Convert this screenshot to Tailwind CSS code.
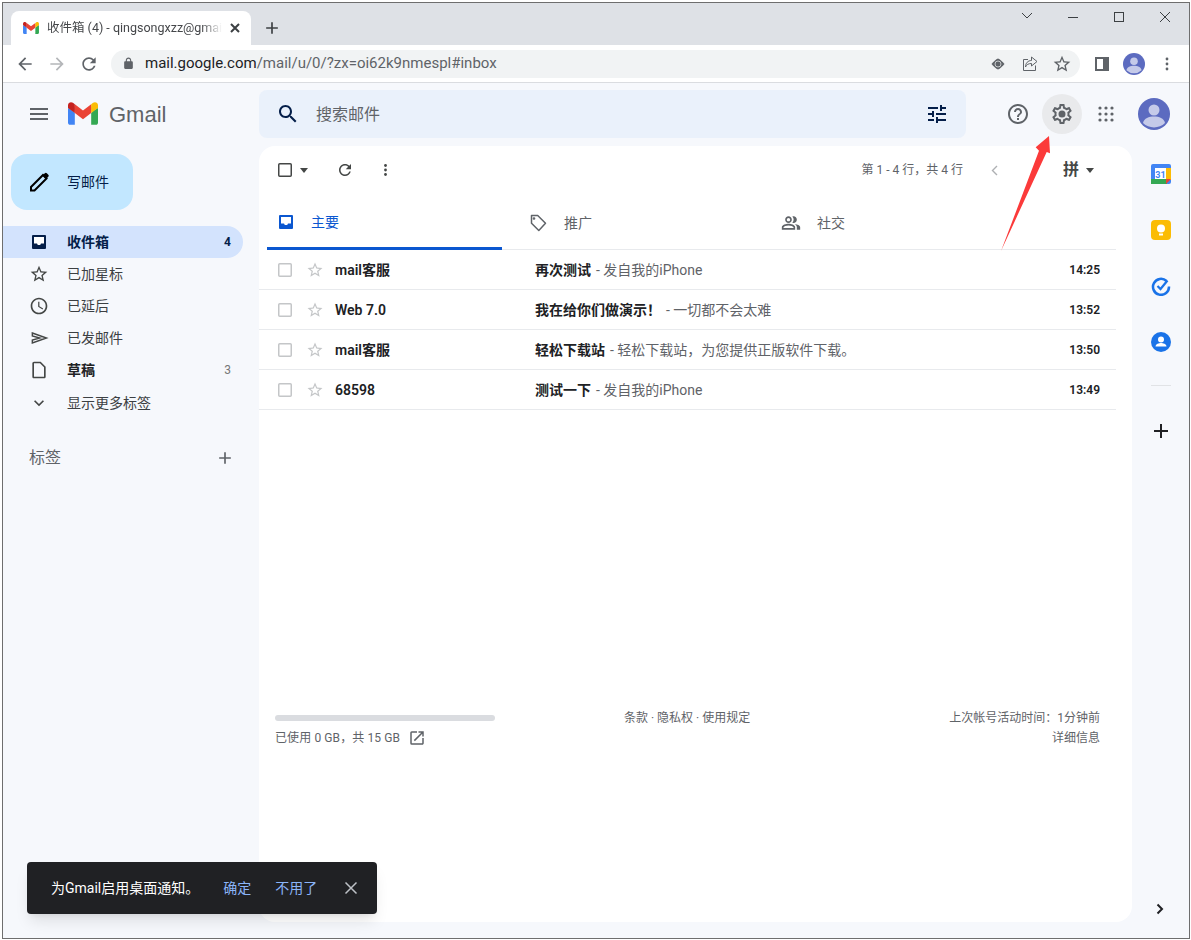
<!DOCTYPE html>
<html lang="zh-CN">
<head>
    <meta charset="UTF-8">
    <title>收件箱 (4) - Gmail</title>
    <script src="https://cdn.jsdelivr.net/npm/@tailwindcss/browser@4"></script>
</head>
<body class="bg-white pl-[2px] pt-[2px] font-['Roboto','Noto_Sans_CJK_SC',sans-serif] text-[#202124]">
    <svg class="hidden">
        <symbol id="i-star" viewBox="0 0 24 24"><path d="M22 9.24l-7.19-.62L12 2 9.19 8.63 2 9.24l5.46 4.73L5.82 21 12 17.27 18.18 21l-1.63-7.03L22 9.24zM12 15.4l-3.76 2.27 1-4.28-3.32-2.88 4.38-.38L12 6.1l1.71 4.04 4.38.38-3.32 2.88 1 4.28L12 15.4z"/></symbol>
        <symbol id="i-plus" viewBox="0 0 24 24"><path d="M19 13h-6v6h-2v-6H5v-2h6V5h2v6h6v2z"/></symbol>
        <symbol id="i-m" viewBox="0 0 256 193">
            <path fill="#4285F4" d="M58.18 192.05V93.14L27.5 65.08 0 49.51v125.09c0 9.66 7.83 17.45 17.45 17.45h40.73Z"/>
            <path fill="#34A853" d="M197.82 192.05h40.73c9.66 0 17.45-7.83 17.45-17.45V49.51l-31.16 17.84-27.02 25.79v98.91Z"/>
            <path fill="#EA4335" d="m58.18 93.14-4.17-38.65 4.17-36.99L128 69.87l69.82-52.37 4.67 35-4.67 40.64L128 145.5z"/>
            <path fill="#FBBC04" d="M197.82 17.5V93.14L256 49.51V26.24c0-21.59-24.64-33.89-41.89-20.95L197.82 17.5Z"/>
            <path fill="#C5221F" d="m0 49.51 26.76 20.07L58.18 93.14V17.5L41.89 5.29C24.61-7.65 0 4.65 0 26.24v23.27Z"/>
        </symbol>
        <symbol id="i-avatar" viewBox="0 0 32 32">
            <circle cx="16" cy="16" r="16" fill="#5c6bc0"/>
            <circle cx="16" cy="12" r="5.5" fill="#c5cae9"/>
            <path fill="#c5cae9" d="M5 25c1-5 6-6.500 11-6.500s10 1.500 11 6.500a16 16 0 0 1-22 0z"/>
        </symbol>
    </svg>

    <div class="relative flex h-[937px] w-[1188px] flex-col overflow-hidden border border-[#6e6e6e] bg-[#f6f8fc]">

        <!-- chrome tabs -->
        <div class="flex h-[42px] shrink-0 items-end bg-[#dee1e6] pl-2">
            <div class="flex h-[34px] w-[240px] items-center rounded-t-lg bg-white pl-3 pr-[9px]">
                <svg class="h-3 w-4 shrink-0"><use href="#i-m"/></svg>
                <span class="ml-2 w-[175px] overflow-hidden whitespace-nowrap text-[12.5px] text-[#45474a] [mask-image:linear-gradient(to_right,#000_88%,transparent)]">收件箱 (4) - qingsongxzz@gmail.com</span>
                <svg class="ml-[6px] h-[14px] w-[14px] shrink-0 fill-none stroke-[#3c4043] stroke-2" viewBox="0 0 14 14"><path d="M3 3l8 8M11 3l-8 8"/></svg>
            </div>
            <svg class="mb-[7px] ml-[11px] h-5 w-5 fill-[#3c4043]" viewBox="0 0 24 24"><use href="#i-plus"/></svg>
            <div class="ml-auto flex self-start pr-px pt-2">
                <svg class="h-3 w-[46px] fill-none stroke-[#3c4043]" viewBox="0 0 46 12"><path d="M18 2l5 5 5-5"/></svg>
                <svg class="h-3 w-[46px] fill-none stroke-[#3c4043]" viewBox="0 0 46 12"><path d="M18 6.500h10"/></svg>
                <svg class="h-3 w-[46px] fill-none stroke-[#3c4043]" viewBox="0 0 46 12"><rect x="18.500" y="1.500" width="9" height="9"/></svg>
                <svg class="h-3 w-[46px] fill-none stroke-[#3c4043]" viewBox="0 0 46 12"><path d="M18 1l10 10M28 1L18 11"/></svg>
            </div>
        </div>

        <!-- chrome toolbar -->
        <div class="flex h-[38px] shrink-0 items-center border-b border-[#dadce0] bg-white pl-[12px]">
            <svg class="h-5 w-5 fill-[#5f6368]" viewBox="0 0 24 24"><path d="M20 11H7.830l5.590-5.590L12 4l-8 8 8 8 1.410-1.410L7.830 13H20v-2z"/></svg>
            <svg class="ml-3 h-5 w-5 fill-[#b4b6b9]" viewBox="0 0 24 24"><path d="M12 4l-1.410 1.410L16.170 11H4v2h12.170l-5.580 5.590L12 20l8-8z"/></svg>
            <svg class="ml-3 h-5 w-5 fill-[#5f6368]" viewBox="0 0 24 24"><path d="M17.650 6.350C16.200 4.900 14.210 4 12 4c-4.420 0-7.990 3.580-7.990 8s3.570 8 7.990 8c3.730 0 6.840-2.550 7.730-6h-2.080c-.82 2.330-3.040 4-5.650 4-3.310 0-6-2.690-6-6s2.690-6 6-6c1.660 0 3.140.69 4.220 1.780L13 11h7V4l-2.350 2.350z"/></svg>
            <div class="ml-3 flex h-7 w-[969px] shrink-0 items-center rounded-full bg-[#f1f3f4] pl-[11px]">
                <svg class="h-[13px] w-[13px] fill-[#5f6368]" viewBox="0 0 24 24"><path d="M18 8h-1V6c0-2.760-2.240-5-5-5S7 3.240 7 6v2H6c-1.100 0-2 .9-2 2v10c0 1.100.9 2 2 2h12c1.100 0 2-.9 2-2V10c0-1.100-.9-2-2-2zM9 6c0-1.660 1.340-3 3-3s3 1.340 3 3v2H9V6z"/></svg>
                <span class="ml-[10px] text-[15px] text-[#202124]">mail.google.com<span class="text-[#5f6368]">/mail/u/0/?zx=oi62k9nmespl#inbox</span></span>
                <div class="ml-auto flex items-center gap-3 pr-2">
                    <svg class="h-5 w-5" viewBox="0 0 20 20"><path fill="#5f6368" d="M10 4.500c1 0 5 3.500 6.500 5.500-1.500 2-5.500 5.500-6.500 5.500S5 12 3.500 10C5 8 9 4.500 10 4.500z"/><circle cx="10" cy="10" r="3" fill="none" stroke="#c9cbcd"/></svg>
                    <svg class="h-5 w-5 fill-none stroke-[#5f6368]" viewBox="0 0 20 20"><path d="M8 5.500H3.500v11h12v-5M11.500 3l5.500 4.500-5.500 4.500V9.500c-3 0-5 1-6 3.500 0-4 2.500-6.500 6-6.500z"/></svg>
                    <svg class="h-5 w-5 fill-[#5f6368]" viewBox="0 0 24 24"><use href="#i-star"/></svg>
                </div>
            </div>
            <svg class="ml-[15px] h-[14px] w-[14px] shrink-0" viewBox="0 0 14 14"><path fill="#5f6368" fill-rule="evenodd" d="M0 0h14v14H0zM2 2v10h6V2z"/></svg>
            <svg class="ml-[14px] h-[22px] w-[22px] shrink-0"><use href="#i-avatar"/></svg>
            <svg class="ml-[20px] h-[14px] w-1 shrink-0 fill-[#5f6368]" viewBox="0 0 4 14"><circle cx="2" cy="2" r="1.400"/><circle cx="2" cy="7" r="1.400"/><circle cx="2" cy="12" r="1.400"/></svg>
        </div>

        <!-- gmail header -->
        <div class="flex h-[63px] shrink-0 items-center pb-[2px]">
            <div class="flex w-[256px] shrink-0 items-center pl-[24px]">
                <svg class="h-6 w-6 fill-[#5f6368]" viewBox="0 0 24 24"><path d="M3 18h18v-2H3v2zm0-5h18v-2H3v2zm0-7v2h18V6H3z"/></svg>
                <svg class="ml-[17px] h-[23px] w-[30px]"><use href="#i-m"/></svg>
                <span class="ml-[11px] pt-[2px] font-['Liberation_Sans','Roboto',sans-serif] text-[22px] text-[#5f6368]">Gmail</span>
            </div>
            <div class="flex h-12 w-[707px] shrink-0 items-center rounded-lg bg-[#eaf1fb] pl-[17px] pr-[17px]">
                <svg class="h-6 w-6 fill-[#041e49]" viewBox="0 0 24 24"><path d="M15.500 14h-.79l-.28-.27C15.410 12.590 16 11.110 16 9.500 16 5.910 13.090 3 9.500 3S3 5.910 3 9.500 5.910 16 9.500 16c1.610 0 3.090-.59 4.230-1.570l.27.28v.79l5 4.990L20.490 19l-4.990-5zm-6 0C7.010 14 5 11.990 5 9.500S7.010 5 9.500 5 14 7.010 14 9.500 11.990 14 9.500 14z"/></svg>
                <span class="ml-4 pt-[2px] text-base text-[#5f6368]">搜索邮件</span>
                <svg class="ml-auto h-6 w-6 fill-[#041e49]" viewBox="0 0 24 24"><path d="M3 17v2h6v-2H3zM3 5v2h10V5H3zm10 16v-2h8v-2h-8v-2h-2v6h2zM7 9v2H3v2h4v2h2V9H7zm14 4v-2H11v2h10zm-6-4h2V7h4V5h-4V3h-2v6z"/></svg>
            </div>
            <div class="flex flex-1 items-center pl-[40px]">
                <svg class="h-6 w-6 shrink-0 fill-[#5f6368]" viewBox="0 0 24 24"><path d="M11 18h2v-2h-2v2zm1-16C6.480 2 2 6.480 2 12s4.480 10 10 10 10-4.480 10-10S17.520 2 12 2zm0 18c-4.410 0-8-3.590-8-8s3.590-8 8-8 8 3.590 8 8-3.590 8-8 8zm0-14c-2.210 0-4 1.790-4 4h2c0-1.100.9-2 2-2s2 .9 2 2c0 2-3 1.750-3 5h2c0-2.250 3-2.500 3-5 0-2.210-1.790-4-4-4z"/></svg>
                <div class="ml-[12px] flex h-10 w-10 shrink-0 items-center justify-center rounded-full bg-[#e9eaec]">
                    <svg class="h-6 w-6 fill-[#5f6368]" viewBox="0 0 24 24"><path d="M19.430 12.980c.04-.32.07-.64.07-.98 0-.34-.03-.66-.07-.98l2.110-1.650c.19-.15.24-.42.12-.64l-2-3.460c-.09-.16-.26-.25-.44-.25-.06 0-.12.01-.17.03l-2.490 1c-.52-.4-1.080-.73-1.690-.98l-.38-2.650C14.460 2.180 14.250 2 14 2h-4c-.25 0-.46.18-.49.42l-.38 2.650c-.61.25-1.170.59-1.690.98l-2.490-1c-.06-.02-.12-.03-.18-.03-.17 0-.34.09-.43.25l-2 3.460c-.13.22-.07.49.12.64l2.110 1.650c-.04.32-.07.65-.07.98 0 .33.03.66.07.98l-2.110 1.650c-.19.15-.24.42-.12.64l2 3.460c.09.16.26.25.44.25.06 0 .12-.01.17-.03l2.490-1c.52.4 1.080.73 1.690.98l.38 2.650c.03.24.24.42.49.42h4c.25 0 .46-.18.49-.42l.38-2.650c.61-.25 1.170-.59 1.690-.98l2.490 1c.06.02.12.03.18.03.17 0 .34-.09.43-.25l2-3.460c.12-.22.07-.49-.12-.64l-2.110-1.650zm-1.980-1.710c.04.31.05.52.05.73 0 .21-.02.43-.05.73l-.14 1.130.89.7 1.080.84-.7 1.210-1.270-.51-1.040-.42-.9.68c-.43.32-.84.56-1.250.73l-1.060.43-.16 1.130-.2 1.350h-1.400l-.19-1.350-.16-1.130-1.060-.43c-.43-.18-.83-.41-1.230-.71l-.91-.7-1.060.43-1.270.51-.7-1.210 1.080-.84.89-.7-.14-1.130c-.03-.31-.05-.54-.05-.74s.02-.43.05-.73l.14-1.130-.89-.7-1.080-.84.7-1.210 1.270.51 1.040.42.9-.68c.43-.32.84-.56 1.250-.73l1.060-.43.16-1.130.2-1.350h1.390l.19 1.350.16 1.130 1.060.43c.43.18.83.41 1.230.71l.91.7 1.060-.43 1.270-.51.7 1.210-1.070.85-.89.7.14 1.130zM12 8.500a3.500 3.500 0 1 0 0 7 3.500 3.500 0 0 0 0-7z"/></svg>
                </div>
                <svg class="ml-[16px] h-4 w-4 shrink-0 fill-[#5f6368]" viewBox="0 0 16 16"><circle cx="2" cy="2" r="1.600"/><circle cx="8" cy="2" r="1.600"/><circle cx="14" cy="2" r="1.600"/><circle cx="2" cy="8" r="1.600"/><circle cx="8" cy="8" r="1.600"/><circle cx="14" cy="8" r="1.600"/><circle cx="2" cy="14" r="1.600"/><circle cx="8" cy="14" r="1.600"/><circle cx="14" cy="14" r="1.600"/></svg>
                <svg class="ml-[24px] h-8 w-8 shrink-0"><use href="#i-avatar"/></svg>
            </div>
        </div>

        <div class="flex min-h-0 flex-1 pb-4">
            <!-- sidebar -->
            <div class="w-[256px] shrink-0 pt-2">
                <div class="ml-2 flex h-14 w-[122px] items-center rounded-2xl bg-[#c2e7ff] pl-[16px]">
                    <svg class="h-6 w-6" viewBox="0 0 24 24"><path fill="none" stroke="#000" stroke-width="2" d="M4 20.500v-3.500L16 5l3.500 3.500L7.500 20.500z"/><path d="M15.500 5.500l2.300-2.300a1.400 1.400 0 0 1 2 0l1.500 1.500a1.400 1.400 0 0 1 0 2L19 9z"/></svg>
                    <span class="ml-[16px] text-sm text-[#041e49]">写邮件</span>
                </div>
                <div class="mt-4 text-sm">
                    <div class="flex h-8 w-[240px] items-center rounded-r-full bg-[#d3e3fd] pl-[26px] pr-3 font-bold text-[#041e49]">
                        <svg class="h-5 w-5 shrink-0" viewBox="0 0 20 20"><rect x="3" y="3" width="14" height="14" rx="1" fill="#041e49"/><path fill="#fff" d="M5 5h10v6.500h-3l-.8 1.500H8.800L8 11.500H5z"/></svg>
                        <span class="ml-[18px]">收件箱</span>
                        <span class="ml-auto text-xs">4</span>
                    </div>
                    <div class="flex h-8 items-center pl-[26px] text-[#3c4043]">
                        <svg class="h-5 w-5 shrink-0 fill-[#444746]" viewBox="0 0 24 24"><use href="#i-star"/></svg>
                        <span class="ml-[18px]">已加星标</span>
                    </div>
                    <div class="flex h-8 items-center pl-[26px] text-[#3c4043]">
                        <svg class="h-5 w-5 shrink-0 fill-[#444746]" viewBox="0 0 24 24"><path d="M11.990 2C6.470 2 2 6.480 2 12s4.470 10 9.990 10C17.520 22 22 17.520 22 12S17.520 2 11.990 2zM12 20c-4.420 0-8-3.580-8-8s3.580-8 8-8 8 3.580 8 8-3.580 8-8 8zm.5-13H11v6l5.250 3.150.75-1.230-4.500-2.670z"/></svg>
                        <span class="ml-[18px]">已延后</span>
                    </div>
                    <div class="flex h-8 items-center pl-[26px] text-[#3c4043]">
                        <svg class="h-5 w-5 shrink-0 fill-none stroke-[#444746] stroke-[1.700]" viewBox="0 0 24 24"><path d="M4 6l17 6-17 6v-3.500l9-2.500-9-2.500z"/></svg>
                        <span class="ml-[18px]">已发邮件</span>
                    </div>
                    <div class="flex h-8 w-[240px] items-center pl-[26px] pr-3 font-semibold text-[#202124]">
                        <svg class="h-5 w-5 shrink-0 fill-[#444746]" viewBox="0 0 24 24"><path d="M14 2H6c-1.100 0-2 .9-2 2v16c0 1.100.9 2 2 2h12c1.100 0 2-.9 2-2V8l-6-6zm4 18H6V4h7.170L18 8.830V20z"/></svg>
                        <span class="ml-[18px]">草稿</span>
                        <span class="ml-auto text-xs font-normal text-[#777]">3</span>
                    </div>
                    <div class="mt-px flex h-8 items-center pl-[26px] text-[#3c4043]">
                        <svg class="h-5 w-5 shrink-0 fill-[#444746]" viewBox="0 0 24 24"><path d="M16.590 8.590L12 13.170 7.410 8.590 6 10l6 6 6-6z"/></svg>
                        <span class="ml-[18px]">显示更多标签</span>
                    </div>
                </div>
                <div class="mt-[23px] flex h-8 w-[232px] items-center justify-between pl-[26px] text-base text-[#5f6368]">
                    <span>标签</span>
                    <svg class="h-5 w-5 fill-[#5f6368]" viewBox="0 0 24 24"><use href="#i-plus"/></svg>
                </div>
            </div>

            <!-- mail card -->
            <div class="w-[873px] shrink-0 rounded-2xl bg-white">
                <div class="flex h-12 items-center pl-[17px] pr-[38px]">
                    <svg class="h-[18px] w-[18px] fill-none stroke-[#444746] stroke-[1.500]" viewBox="0 0 18 18"><rect x="2.750" y="2.750" width="12.500" height="12.500" rx="1"/></svg>
                    <svg class="ml-[6px] h-[5px] w-2 fill-[#444746]" viewBox="0 0 8 5"><path d="M0 0h8L4 5z"/></svg>
                    <svg class="ml-[28px] h-[18px] w-[18px] fill-[#444746]" viewBox="0 0 24 24"><path d="M17.650 6.350C16.200 4.900 14.210 4 12 4c-4.420 0-7.990 3.580-7.990 8s3.570 8 7.990 8c3.730 0 6.840-2.550 7.730-6h-2.080c-.82 2.330-3.040 4-5.650 4-3.310 0-6-2.690-6-6s2.690-6 6-6c1.660 0 3.140.69 4.220 1.780L13 11h7V4l-2.350 2.350z"/></svg>
                    <svg class="ml-[30px] h-3 w-[3px] fill-[#444746]" viewBox="0 0 3 12"><circle cx="1.500" cy="1.500" r="1.400"/><circle cx="1.500" cy="6" r="1.400"/><circle cx="1.500" cy="10.500" r="1.400"/></svg>
                    <span class="ml-auto text-xs text-[#5f6368]">第 1 - 4 行，共 4 行</span>
                    <svg class="ml-[28px] h-[11px] w-[7px] fill-none stroke-[#aeb0b3] stroke-[1.400]" viewBox="0 0 7 11"><path d="M6 1L1.500 5.500 6 10"/></svg>
                    <span class="ml-[65px] text-base font-bold text-[#444746]">拼</span>
                    <svg class="ml-[7px] h-[5px] w-2 fill-[#444746]" viewBox="0 0 8 5"><path d="M0 0h8L4 5z"/></svg>
                </div>

                <!-- tabs -->
                <div class="ml-2 mt-1 flex h-[52px] w-[849px] border-b border-[#e8eaed] text-sm text-[#5f6368]">
                    <div class="flex h-[52px] w-[235px] items-center border-b-[3px] border-[#0b57d0] pb-[2px] pl-[9px] text-[#0b57d0]">
                        <svg class="h-5 w-5 shrink-0" viewBox="0 0 20 20"><rect x="3" y="3" width="14" height="14" rx="1" fill="#0b57d0"/><path fill="#fff" d="M5 5h10v6.500h-3l-.8 1.500H8.800L8 11.500H5z"/></svg>
                        <span class="ml-[15px]">主要</span>
                    </div>
                    <div class="ml-[24px] flex w-[255px] items-center pb-[2px] pl-[2px]">
                        <svg class="h-5 w-5 shrink-0 fill-none stroke-[#5f6368] stroke-[1.500]" viewBox="0 0 20 20"><path d="M3.500 2.500h6.200l7.800 7.800-6.700 7.200-7.300-7.300z" stroke-linejoin="round"/><circle cx="6" cy="5.500" r=".6"/></svg>
                        <span class="ml-4">推广</span>
                    </div>
                    <div class="flex items-center pb-[2px]">
                        <svg class="h-5 w-5 shrink-0 fill-[#5f6368]" viewBox="0 0 24 24"><path d="M16.670 13.130C18.040 14.060 19 15.320 19 17v3h4v-3c0-2.180-3.570-3.470-6.330-3.870zM15 12c2.210 0 4-1.790 4-4s-1.790-4-4-4c-.47 0-.91.1-1.330.26a5.990 5.990 0 010 7.480c.42.16.86.26 1.330.26zM9 12c2.210 0 4-1.790 4-4s-1.790-4-4-4-4 1.790-4 4 1.790 4 4 4zm0-6c1.100 0 2 .9 2 2s-.9 2-2 2-2-.9-2-2 .9-2 2-2zm0 7c-2.670 0-8 1.340-8 4v3h16v-3c0-2.660-5.330-4-8-4zm6 5H3v-.99C3.200 16.290 6.300 15 9 15s5.800 1.290 6 2v1z"/></svg>
                        <span class="ml-4">社交</span>
                    </div>
                </div>

                <!-- rows -->
                <div class="w-[857px] text-sm">
                    <div class="flex h-10 items-center border-b border-[#e8eaed] pl-[17px] pr-[16px]">
                        <svg class="h-[18px] w-[18px] shrink-0 fill-none stroke-[#c4c6c8] stroke-[1.500]" viewBox="0 0 18 18"><rect x="2.750" y="2.750" width="12.500" height="12.500" rx="1"/></svg>
                        <svg class="ml-3 h-[18px] w-[18px] shrink-0 fill-[#c4c6c8]" viewBox="0 0 24 24"><use href="#i-star"/></svg>
                        <span class="ml-[11px] w-[200px] shrink-0 font-semibold text-[#202124]">mail客服</span>
                        <span class="font-semibold text-[#202124]">再次测试</span>
                        <span class="ml-[5px] text-[#5f6368]">- 发自我的iPhone</span>
                        <span class="ml-auto text-xs font-semibold text-[#202124]">14:25</span>
                    </div>
                    <div class="flex h-10 items-center border-b border-[#e8eaed] pl-[17px] pr-[16px]">
                        <svg class="h-[18px] w-[18px] shrink-0 fill-none stroke-[#c4c6c8] stroke-[1.500]" viewBox="0 0 18 18"><rect x="2.750" y="2.750" width="12.500" height="12.500" rx="1"/></svg>
                        <svg class="ml-3 h-[18px] w-[18px] shrink-0 fill-[#c4c6c8]" viewBox="0 0 24 24"><use href="#i-star"/></svg>
                        <span class="ml-[11px] w-[200px] shrink-0 font-semibold text-[#202124]">Web 7.0</span>
                        <span class="font-semibold text-[#202124]">我在给你们做演示！</span>
                        <span class="ml-[5px] text-[#5f6368]">- 一切都不会太难</span>
                        <span class="ml-auto text-xs font-semibold text-[#202124]">13:52</span>
                    </div>
                    <div class="flex h-10 items-center border-b border-[#e8eaed] pl-[17px] pr-[16px]">
                        <svg class="h-[18px] w-[18px] shrink-0 fill-none stroke-[#c4c6c8] stroke-[1.500]" viewBox="0 0 18 18"><rect x="2.750" y="2.750" width="12.500" height="12.500" rx="1"/></svg>
                        <svg class="ml-3 h-[18px] w-[18px] shrink-0 fill-[#c4c6c8]" viewBox="0 0 24 24"><use href="#i-star"/></svg>
                        <span class="ml-[11px] w-[200px] shrink-0 font-semibold text-[#202124]">mail客服</span>
                        <span class="font-semibold text-[#202124]">轻松下载站</span>
                        <span class="ml-[5px] text-[#5f6368]">- 轻松下载站，为您提供正版软件下载。</span>
                        <span class="ml-auto text-xs font-semibold text-[#202124]">13:50</span>
                    </div>
                    <div class="flex h-10 items-center border-b border-[#e8eaed] pl-[17px] pr-[16px]">
                        <svg class="h-[18px] w-[18px] shrink-0 fill-none stroke-[#c4c6c8] stroke-[1.500]" viewBox="0 0 18 18"><rect x="2.750" y="2.750" width="12.500" height="12.500" rx="1"/></svg>
                        <svg class="ml-3 h-[18px] w-[18px] shrink-0 fill-[#c4c6c8]" viewBox="0 0 24 24"><use href="#i-star"/></svg>
                        <span class="ml-[11px] w-[200px] shrink-0 font-semibold text-[#202124]">68598</span>
                        <span class="font-semibold text-[#202124]">测试一下</span>
                        <span class="ml-[5px] text-[#5f6368]">- 发自我的iPhone</span>
                        <span class="ml-auto text-xs font-semibold text-[#202124]">13:49</span>
                    </div>
                </div>

                <!-- footer -->
                <div class="mt-[298px] flex w-[857px] pl-4 pr-4 text-xs text-[#5f6368]">
                    <div class="w-[220px] shrink-0 pt-[7px]">
                        <div class="h-[6px] rounded-full bg-[#dadce0]"></div>
                        <div class="mt-[8px] flex items-center">
                            <span class="tracking-[0.1px]">已使用 0 GB，共 15 GB</span>
                            <svg class="ml-[8px] h-[18px] w-[18px] fill-[#5f6368]" viewBox="0 0 24 24"><path d="M19 19H5V5h7V3H5a2 2 0 00-2 2v14a2 2 0 002 2h14c1.100 0 2-.9 2-2v-7h-2v7zM14 3v2h3.590l-9.830 9.830 1.410 1.410L19 6.410V10h2V3h-7z"/></svg>
                        </div>
                    </div>
                    <div class="ml-[129px] shrink-0 pt-[2px]">条款 · 隐私权 · 使用规定</div>
                    <div class="ml-auto text-right leading-5">
                        <div>上次帐号活动时间：1分钟前</div>
                        <div>详细信息</div>
                    </div>
                </div>
            </div>

            <!-- right rail -->
            <div class="relative flex flex-1 flex-col items-center pt-[18px]">
                <svg class="h-5 w-5" viewBox="0 0 20 20">
                    <rect width="20" height="20" rx="2" fill="#4285f4"/>
                    <rect x="4" y="4" width="12" height="12" fill="#fff"/>
                    <rect x="15" y="4" width="5" height="12" fill="#fbbc04"/>
                    <rect y="15" width="16" height="5" fill="#34a853"/>
                    <path d="M15 15h5l-5 5z" fill="#ea4335"/>
                    <text x="9.500" y="13.500" text-anchor="middle" font-size="9" font-weight="700" fill="#4285f4" font-family="Roboto">31</text>
                </svg>
                <div class="mt-[36px] flex h-5 w-5 items-center justify-center rounded-sm bg-[#fbbc04]">
                    <svg class="h-[14px] w-[14px] fill-white" viewBox="0 0 14 14"><circle cx="7" cy="5.500" r="4"/><rect x="5" y="10.500" width="4" height="2"/></svg>
                </div>
                <svg class="mt-[36px] h-5 w-5 fill-none stroke-[#1a73e8]" viewBox="0 0 20 20">
                    <path stroke-width="2.500" d="M15.500 5a8 8 0 1 0 2.500 5.500"/>
                    <path stroke-width="2.200" d="M6.500 10l3 3 7-8.500"/>
                </svg>
                <svg class="mt-[36px] h-5 w-5" viewBox="0 0 20 20">
                    <circle cx="10" cy="10" r="10" fill="#1a73e8"/>
                    <circle cx="10" cy="7.500" r="3" fill="#fff"/>
                    <path fill="#fff" d="M4.500 14.500c0-2.500 3.500-3.500 5.500-3.500s5.500 1 5.500 3.500z"/>
                </svg>
                <div class="mt-[33px] h-px w-5 bg-[#e1e3e6]"></div>
                <svg class="mt-[33px] h-6 w-6 fill-[#202124]" viewBox="0 0 24 24"><use href="#i-plus"/></svg>
                <svg class="absolute bottom-[7px] left-[24px] h-[12px] w-2 fill-none stroke-[#202124] stroke-2" viewBox="0 0 8 12"><path d="M1.500 1.500L6 6l-4.500 4.500"/></svg>
            </div>
        </div>

        <!-- annotation arrow drawn over the page -->
        <svg class="pointer-events-none absolute left-[990px] top-[130px] h-[125px] w-[70px]" viewBox="0 0 70 125">
            <path fill="#fb3a3a" d="M56 3L42.700 14.300 46 17.700 8 118 53.700 19 57 20.300z"/>
        </svg>

        <!-- notification toast -->
        <div class="absolute bottom-6 left-[24px] flex h-[52px] w-[350px] items-center rounded bg-[#202124] pl-6 text-sm text-white shadow-lg">
            <span>为Gmail启用桌面通知。</span>
            <span class="ml-6 text-[#8ab4f8]">确定</span>
            <span class="ml-6 text-[#8ab4f8]">不用了</span>
            <svg class="ml-[27px] h-[14px] w-[14px] fill-none stroke-[#bdc1c6] stroke-[1.500]" viewBox="0 0 14 14"><path d="M1.500 1.500l11 11M12.500 1.500l-11 11"/></svg>
        </div>
    </div>
</body>
</html>
